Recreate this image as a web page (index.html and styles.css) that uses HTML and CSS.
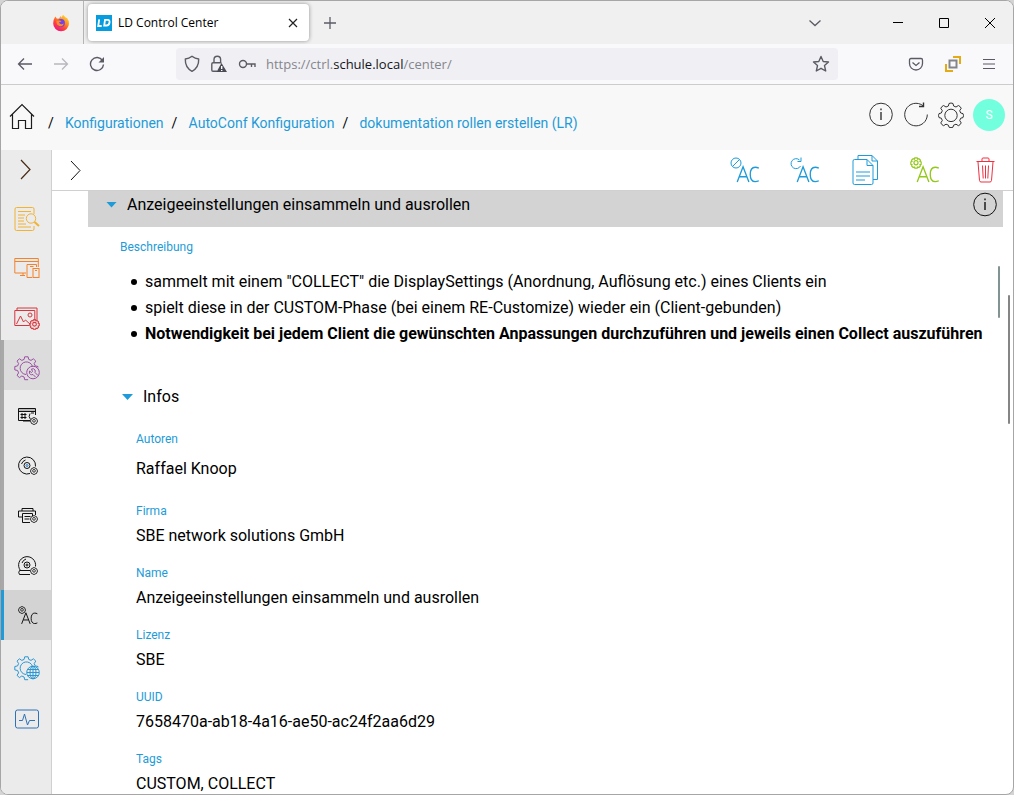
FILE: index.html
```html
<!DOCTYPE html>
<html lang="de">
<head>
<meta charset="utf-8">
<title>LD Control Center</title>
<link rel="stylesheet" href="styles.css">
</head>
<body>
<svg class="defs" aria-hidden="true">
  <symbol id="gear" viewBox="0 0 26 26">
    <path d="M11 1.500q2-1 4 0l.6 2.500 2.400 1 2.400-1.500q2 .8 2.800 2.800L21.700 8.700l1 2.300 2.300.6q1 2 0 4l-2.300.6-1 2.300 1.500 2.400q-.8 2-2.800 2.800L18 22.200l-2.400 1-.6 2q-2 1-4 0l-.6-2-2.400-1-2.400 1.500q-2-.8-2.800-2.800l1.500-2.400-1-2.300-2.300-.6q-1-2 0-4l2.300-.6 1-2.300-1.500-2.400q.8-2 2.800-2.800L8 5l2.400-1z" stroke-linejoin="round"/>
    <circle cx="13" cy="13.400" r="6.200"/>
  </symbol>
  <symbol id="biggear" viewBox="0 0 26 26">
    <path d="M24 11.500v-1l-2.800-.6-1-2.400 1.600-2.400-2.400-2.300-2.400 1.600-2.300-1L14.100.8h-3.400l-.6 2.600-2.300 1-2.400-1.600L3 5.100l1.600 2.400-1 2.400-2.800.6v3.400l2.800.6 1 2.400L3 19.300l2.400 2.300L7.800 20l2.300 1 .6 2.700h3.400"/>
    <path d="M12 18.500a6.300 6.300 0 1 1 6.500-8"/>
  </symbol>
  <symbol id="minigear" viewBox="0 0 10 10">
    <path d="M4 .8h2l.4 1 1-.4 1.300 1.300-.4 1 1 .4v2l-1 .3.4 1-1.300 1.300-1-.4-.4 1H4l-.4-1-1 .4-1.300-1.300.4-1-1-.3v-2l1-.4-.4-1 1.300-1.300 1 .4z"/><circle cx="5" cy="4.800" r="1.700"/>
  </symbol>
  <symbol id="ac" viewBox="0 0 26 20">
    <path d="M1 19 7.500 2 14 19M3.500 13h8M25 3.500Q23 2.500 21 2.500c-3.500 0-5.500 3-5.500 8s2 8 5.500 8q2 0 4-1" stroke-width="1.500"/>
  </symbol>
  <symbol id="info" viewBox="0 0 26 26">
    <circle cx="13" cy="12.500" r="11.300"/><path d="M13 10v8M13 6.500v1.700" stroke-width="1.400"/>
  </symbol>
  <symbol id="chevron" viewBox="0 0 26 26"><path d="m8 4 9 9.500L8 23"/></symbol>
</svg>
<div class="window">
  <header class="tabs">
    <span class="view">
      <svg width="18" height="18" viewBox="0 0 18 18">
        <defs><linearGradient id="fire" x1="1" y1="0" x2=".3" y2="1"><stop offset="0" stop-color="#fff044"/><stop offset=".4" stop-color="#ff9a1f"/><stop offset=".7" stop-color="#ff4438"/><stop offset="1" stop-color="#f0147f"/></linearGradient></defs>
        <path fill="url(#fire)" d="M3.300 2.500 5 4.800l2-.3L8.700 2l.8 1.800L11 .8l2.700 2.600L15 4q2 2.400 2 5.500a7.900 7.700 0 0 1-15.800 0Q1 6 3.300 2.500z"/>
        <circle cx="9" cy="9" r="3.900" fill="#7542e5"/><path d="M4.500 6.800q3-1.600 5 .7l-2.500.8q1 3 5 1.200-1.500 3.500-4.700 2.500T4.500 6.800" fill="#ff8b24"/>
      </svg>
    </span>
    <div class="tab">
      <svg width="16" height="16" viewBox="0 0 16 16"><rect width="16" height="16" fill="#069de0"/><path d="M3.200 4.300 2.200 11h3.500M9 4.800h2.700q2.200 0 1.800 2.700-.4 3-3 3H8.200z" fill="none" stroke="#fff" stroke-width="1.800"/></svg>
      <span class="tab-title">LD Control Center</span>
      <button class="plain" aria-label="Tab schließen"><svg width="10" height="10" viewBox="0 0 10 10"><path d="m1 1 8 8M9 1 1 9" stroke="#222" stroke-width="1.200"/></svg></button>
    </div>
    <button class="plain newtab" aria-label="Neuer Tab"><svg width="14" height="14" viewBox="0 0 14 14"><path d="M7 1v12M1 7h12" stroke="#5b5b66" stroke-width="1.300"/></svg></button>
    <button class="plain alltabs" aria-label="Alle Tabs"><svg width="14" height="14" viewBox="0 0 14 14" fill="none"><path d="m1.500 4.500 5.500 5 5.500-5" stroke="#5b5b66" stroke-width="1.300"/></svg></button>
    <div class="controls">
      <button class="plain" aria-label="Minimieren"><svg width="12" height="12" viewBox="0 0 12 12"><path d="M1 5.500h10" stroke="#000"/></svg></button>
      <button class="plain" aria-label="Maximieren"><svg width="12" height="12" viewBox="0 0 12 12"><path d="M1.500 1.500h9v9h-9z" stroke="#000" fill="none"/></svg></button>
      <button class="plain" aria-label="Schließen"><svg width="12" height="12" viewBox="0 0 12 12"><path d="m1 1 10 10M11 1 1 11" stroke="#000"/></svg></button>
    </div>
  </header>
  <nav class="navbar" aria-label="Browser">
    <div class="history">
      <button class="plain" aria-label="Zurück"><svg width="16" height="16" viewBox="0 0 16 16" fill="none" stroke="#5b5b66" stroke-width="1.300"><path d="M15 8H1.500M7 2.500 1.500 8 7 13.500"/></svg></button>
      <button class="plain" aria-label="Vor"><svg width="16" height="16" viewBox="0 0 16 16" fill="none" stroke="#b8b8bd" stroke-width="1.300"><path d="M1 8h13.500M9 2.500 14.500 8 9 13.500"/></svg></button>
      <button class="plain" aria-label="Neu laden"><svg width="16" height="16" viewBox="0 0 16 16" fill="none" stroke="#5b5b66" stroke-width="1.400"><path d="M13.500 4.500a6.500 6.500 0 1 0 1 4"/><path d="M15 1v5.500H9.500z" fill="#5b5b66" stroke="none"/></svg></button>
    </div>
    <div class="address">
      <svg width="16" height="18" viewBox="0 0 16 18" fill="none" stroke="#5b5b66" stroke-width="1.400"><path d="M8 1.300q3 2.400 6.700 2.700.3 8.500-6.700 12.300Q1 12.500 1.300 4 5 3.700 8 1.300z" stroke-linejoin="round"/></svg>
      <svg class="lock" width="18" height="18" viewBox="0 0 18 18" fill="none" stroke="#5b5b66" stroke-width="1.400"><path d="M7 16.300H3q-1.200 0-1.200-1.200V9q0-1.200 1.200-1.200h8.500M4 7.700V4.500a3.300 3.300 0 0 1 6.600 0v3.200"/><path d="M11.500 8 17 17H6.500z" fill="#4a4a55" stroke="none"/><path d="M11.700 11v3M11.700 15v1" stroke="#fff"/></svg>
      <svg width="18" height="14" viewBox="0 0 18 14" fill="none" stroke="#5b5b66" stroke-width="1.400"><circle cx="5" cy="7" r="3.500"/><path d="M8.500 7H17v3M13.500 7v3"/></svg>
      <span class="url">https://ctrl.<b>schule.local</b>/center/</span>
      <svg class="star" width="18" height="18" viewBox="0 0 18 18" fill="none" stroke="#5b5b66" stroke-width="1.400" stroke-linejoin="round"><path d="m9 1.500 2.200 5 5.300.5-4 3.600 1.200 5.400L9 13.300 4.300 16l1.200-5.400-4-3.600 5.300-.5z"/></svg>
    </div>
    <div class="extras">
      <button class="plain" aria-label="Pocket"><svg width="16" height="16" viewBox="0 0 16 16" fill="none" stroke="#5b5b66" stroke-width="1.300"><path d="M3 2.500h10q1.500 0 1.500 1.500v3.500a6.500 6.500 0 0 1-13 0V4q0-1.500 1.500-1.500z"/><path d="m4.500 6.500 3.500 3 3.500-3"/></svg></button>
      <button class="plain" aria-label="Erweiterung"><svg width="16" height="16" viewBox="0 0 16 16" fill="none" stroke="#e5ab13" stroke-width="2"><path d="M8 1h7v7M1 8v7h7"/><path d="M4.500 4.500h7v7h-7z" stroke="#84848c"/></svg></button>
      <button class="plain" aria-label="Menü"><svg width="14" height="14" viewBox="0 0 14 14" stroke="#5b5b66" stroke-width="1.200"><path d="M1 2.500h12M1 7h12M1 11.500h12"/></svg></button>
    </div>
  </nav>
  <header class="apphead">
    <nav class="crumbs" aria-label="Pfad">
      <a class="home" href="#" aria-label="Start"><svg width="26" height="28" viewBox="0 0 26 28" fill="none" stroke="#1c1c1c" stroke-width="1.200"><path d="M1 13.500 13 1.500l12 12M3.500 11.500V25.500h6v-8h7v8h6v-14"/></svg></a>
      <i>/</i><a href="#">Konfigurationen</a><i>/</i><a href="#">AutoConf Konfiguration</a><i>/</i><a href="#">dokumentation rollen erstellen (LR)</a>
    </nav>
    <div class="tools">
      <button class="plain" aria-label="Info"><svg class="line" width="26" height="26"><use href="#info"/></svg></button>
      <button class="plain" aria-label="Aktualisieren"><svg class="line" width="26" height="26" viewBox="0 0 26 26"><path d="M24.300 12.500A11.300 11.300 0 1 1 20 3.700"/><path d="M20.500.5v4H16" stroke-width="1.400"/></svg></button>
      <button class="plain" aria-label="Einstellungen"><svg class="line" width="26" height="26"><use href="#gear"/></svg></button>
      <button class="avatar">S</button>
    </div>
  </header>
  <div class="app">
    <nav class="side" aria-label="Module">
      <a href="#" class="toggle" aria-label="Ausklappen"><svg class="line brown" width="26" height="26"><use href="#chevron"/></svg></a>
      <a href="#" aria-label="Protokolle"><svg class="line yellow" width="26" height="26" viewBox="0 0 26 26"><path d="M20 8V3q0-1.500-1.500-1.500h-16Q1 1.500 1 3v20q0 1.500 1.500 1.500h16Q20 24.500 20 23v-3M4 5.500h13M4 9h7M4 12h6M4 15h6M4 18h8M4 21h13"/><circle cx="17" cy="12.500" r="4.700"/><path d="m20.500 16 4.500 4" stroke-width="2"/></svg></a>
      <a href="#" aria-label="Geräte"><svg class="line orange" width="26" height="26" viewBox="0 0 26 26"><path d="M12 17H.8V2.500h23.500V11M.8 5.500h23.500M6 19.500h5M9 17v2.500M18 21.500h-5V8.500h9.500V11M16 10.500h3.500"/><rect x="19" y="12.500" width="6" height="9"/><path d="M21 14.500h2"/></svg></a>
      <a href="#" aria-label="Images"><svg class="line red" width="26" height="26" viewBox="0 0 26 26"><path d="M15 19.500H.8v-15h20V14M3 4V2h20v12M2.500 18l4-8 3 6 2-2 5 4.500"/><circle cx="16" cy="9" r="2"/><use href="#minigear" x="15" y="13" width="11" height="11"/></svg></a>
      <a href="#" class="open" aria-label="Konfiguration"><svg class="line purple" width="26" height="26" viewBox="0 0 26 26"><use href="#biggear"/><circle cx="19" cy="16.500" r="6.300"/><path d="M17.500 13q2.500-1 3.500 1 .5 1 0 2.500l3 3M15.500 15q-.7 2.500 1 3.500 1 .5 2.500 0l2.500 2.500M15.500 15l2 1.500 1-1-1-2.500"/></svg></a>
      <a href="#" class="sub" aria-label="Netzwerk"><svg class="line dark" width="20" height="20" viewBox="0 0 20 20"><path d="M1 3h16v2H1z" fill="#bbb" stroke="none"/><path d="M12 14.500H.5v-12h17V9M.5 5.500h17M2.500 8.500h6M2.500 11.500h6M4 7v6M7 7v6M12 15H5M12 7.500q-2 3 .5 6M13 7h3"/><use href="#minigear" x="12" y="11" width="8" height="8"/></svg></a>
      <a href="#" class="sub" aria-label="Software"><svg class="line dark" width="20" height="20" viewBox="0 0 20 20"><path d="M12 17.500a8.500 8.500 0 1 1 5.500-7M3.500 8q1-3 4-4"/><circle cx="9" cy="9.500" r="3"/><circle cx="9" cy="9.500" r="1" class="accent"/><use href="#minigear" x="12" y="11" width="8" height="8"/></svg></a>
      <a href="#" class="sub" aria-label="Drucker"><svg class="line dark" width="20" height="20" viewBox="0 0 20 20"><path d="M4 11H.5V5h17v4M4 5V2.500h11V5M12 16.500H4.500v-9h10V10M6.500 10.500h6M6.500 13h5"/><use href="#minigear" x="12" y="9" width="8" height="8"/></svg></a>
      <a href="#" class="sub" aria-label="Treiber"><svg class="line dark" width="20" height="20" viewBox="0 0 20 20"><path d="M2.500 14.500a8.500 8.500 0 1 1 15-4M12 18.500H1.500q-1.500-2 0-4H12M4 7q1-3 4-4"/><circle cx="9" cy="9" r="3"/><circle cx="9" cy="9" r="1"/><use href="#minigear" x="12" y="11" width="8" height="8"/></svg></a>
      <a href="#" class="sub current" aria-label="AutoConf"><svg class="line dark" width="20" height="20" viewBox="0 0 20 20"><use href="#minigear" x="0" y="0" width="8" height="8"/><use href="#ac" x="3" y="5" width="17" height="14"/></svg></a>
      <a href="#" aria-label="Web"><svg class="line blue" width="26" height="26" viewBox="0 0 26 26"><use href="#biggear"/><circle cx="19" cy="16.500" r="6.300"/><ellipse cx="19" cy="16.500" rx="3" ry="6.300"/><path d="M19 10v13M13 16.500h12M14 13.500h10M14 19.500h10"/></svg></a>
      <a href="#" aria-label="Monitoring"><svg class="line slate" width="26" height="26" viewBox="0 0 26 26"><rect x="1.500" y="4" width="23" height="18" rx="2"/><path d="M5 14.500h3.500l2-6.500 3 11 2-4.500H21"/></svg></a>
    </nav>
    <main class="main">
      <div class="toolbar">
        <button class="plain" aria-label="Ausklappen"><svg class="line black" width="26" height="26"><use href="#chevron"/></svg></button>
        <div class="actions">
          <button class="plain" aria-label="AutoConf deaktivieren"><svg class="line cyan" width="30" height="30" viewBox="0 0 30 30"><circle cx="6" cy="8" r="5"/><path d="m2.500 11.500 7-7"/><use href="#ac" x="6" y="10" width="24" height="18"/></svg></button>
          <button class="plain" aria-label="AutoConf neu laden"><svg class="line cyan" width="30" height="30" viewBox="0 0 30 30"><path d="M10.500 11A5 5 0 1 1 9.500 5M11 2.500v4H7.500"/><use href="#ac" x="6" y="10" width="24" height="18"/></svg></button>
          <button class="plain" aria-label="Kopieren"><svg class="line cyan" width="30" height="32" viewBox="0 0 30 32"><path d="M17 5.500H4.500Q3 5.500 3 7v22q0 1.500 1.500 1.500h17Q23 30.500 23 29V11.500zM17 5.500v6h6M8 5V1.500h14l5.500 5.500v18.500H23M22 1.500V7h5.500M6 18h14M6 22h14M6 26h9"/></svg></button>
          <button class="plain" aria-label="AutoConf einstellen"><svg class="line green" width="30" height="30" viewBox="0 0 30 30"><use href="#minigear" x="0" y="2" width="12" height="12"/><use href="#ac" x="6" y="10" width="24" height="18"/></svg></button>
          <button class="plain" aria-label="Löschen"><svg class="line pink" width="30" height="30" viewBox="0 0 30 30"><path d="M6.500 6.500h18M12 6V4q0-1 1-1h5q1 0 1 1v2M8 7l1.500 18.500q.2 1.500 1.500 1.500h9q1.300 0 1.500-1.500L23 7M12.500 10.500l.7 13M15.500 10.500v13M18.500 10.500l-.7 13"/></svg></button>
        </div>
      </div>
      <div class="scroll">
        <div class="bar">
          <button class="plain fold"><span class="tri"></span>Anzeigeeinstellungen einsammeln und ausrollen</button>
          <button class="plain" aria-label="Info"><svg class="line black" width="26" height="26"><use href="#info"/></svg></button>
        </div>
        <section class="details">
          <h2 class="label">Beschreibung</h2>
          <ul class="list">
            <li>sammelt mit einem "COLLECT" die DisplaySettings (Anordnung, Auflösung etc.) eines Clients ein</li>
            <li>spielt diese in der CUSTOM-Phase (bei einem RE-Customize) wieder ein (Client-gebunden)</li>
            <li><strong>Notwendigkeit bei jedem Client die gewünschten Anpassungen durchzuführen und jeweils einen Collect auszuführen</strong></li>
          </ul>
          <button class="plain fold"><span class="tri"></span>Infos</button>
          <dl class="infos">
            <div class="first"><dt class="label">Autoren</dt><dd>Raffael Knoop</dd></div>
            <div><dt class="label">Firma</dt><dd>SBE network solutions GmbH</dd></div>
            <div><dt class="label">Name</dt><dd>Anzeigeeinstellungen einsammeln und ausrollen</dd></div>
            <div><dt class="label">Lizenz</dt><dd>SBE</dd></div>
            <div><dt class="label">UUID</dt><dd>7658470a-ab18-4a16-ae50-ac24f2aa6d29</dd></div>
            <div><dt class="label">Tags</dt><dd>CUSTOM, COLLECT</dd></div>
          </dl>
        </section>
        <span class="thumb inner"></span>
        <span class="thumb outer"></span>
      </div>
    </main>
  </div>
</div>
</body>
</html>
```
FILE: styles.css
```css
* { box-sizing: border-box; }
body { margin: 0; background: #d4d4d4; font: 16px/24px Roboto, sans-serif; color: #000; }
a { color: #1e9bd8; text-decoration: none; }
svg { display: block; flex: none; }
.defs { position: absolute; width: 0; height: 0; }
.plain { display: flex; align-items: center; padding: 0; border: 0; background: none; font: inherit; color: inherit; }
.line { fill: none; stroke: #333; stroke-width: 1; }

.window { display: flex; flex-direction: column; height: 100vh; overflow: hidden; border: 1px solid #a6a6a6; border-radius: 8px; background: #fff; }
.tabs { display: flex; align-items: center; flex: none; height: 43px; background: #f0f0f0; }
.view { display: flex; align-items: center; justify-content: flex-end; width: 83px; height: 43px; padding-right: 13px; border-right: 1px solid #b5b5b5; }
.tab { display: flex; align-items: center; gap: 6px; width: 221px; height: 37px; margin-left: 4px; padding: 0 11px 0 8px; border-radius: 4px; background: #fff; box-shadow: 0 0 4px rgba(0, 0, 0, .4); }
.tab-title { flex: 1; font: 12px/16px "Open Sans", sans-serif; }
.newtab { margin-left: 14px; }
.alltabs { margin-left: auto; }
.controls { display: flex; gap: 34px; margin: 0 17px 0 70px; }

.navbar { display: flex; align-items: center; flex: none; height: 41px; border-bottom: 1px solid #ccc; background: #f9f9fb; }
.history { display: flex; gap: 20px; width: 175px; padding-left: 16px; }
.address { display: flex; align-items: center; flex: 1; gap: 10px; height: 32px; padding: 0 8px; border-radius: 4px; background: #f0f0f4; }
.url { flex: 1; font: 13px/18px "Open Sans", sans-serif; color: #85858d; }
.url b { font-weight: 400; color: #15141a; }
.extras { display: flex; align-items: center; gap: 21px; padding: 0 17px 0 70px; }

.apphead { display: flex; justify-content: space-between; flex: none; height: 65px; padding: 14px 8px 0; background: #f8f8f8; }
.crumbs { display: flex; align-items: center; height: 48px; font-size: 14px; }
.home { margin-right: 5px; }
.home svg { margin-top: -12px; }
.crumbs i { font-style: normal; width: 6px; margin: 0 11px 0 8px; }
.tools { display: flex; gap: 9px; height: 32px; }
.avatar { width: 32px; height: 32px; padding: 0; border: 0; border-radius: 50%; background: #72ffde; color: #fff; font: 12px/32px Roboto, sans-serif; }

.app { display: flex; flex: 1; min-height: 0; }
.side { flex: none; width: 51px; border-right: 1px solid #d0d0d0; background: #ebebeb; }
.side a { display: block; height: 50px; padding: 16px 0 0 13px; }
.side .toggle { height: 40px; padding: 6px 0 0 12px; }
.side .open { border-left: 3px solid #a8a8a8; padding-left: 10px; background: #dcdcdc; }
.side .sub { border-left: 3px solid #a8a8a8; padding: 16px 0 0 14px; }
.side .current { border-left-color: #1e9bd8; background: #d3d3d3; }
.yellow { stroke: #f2b233; }
.orange { stroke: #f5822b; }
.red { stroke: #d8343c; }
.purple { stroke: #9c4fa5; }
.blue { stroke: #2a97d4; }
.slate { stroke: #2e72b8; }
.brown { stroke: #4b2b14; stroke-width: 1.200; }
.black, .dark { stroke: #111; }
.accent { stroke: #2678c8; }
.cyan { stroke: #1e9bd8; }
.green { stroke: #93c81a; }
.pink { stroke: #ef3040; }

.main { display: flex; flex-direction: column; flex: 1; min-width: 0; }
.toolbar { display: flex; align-items: center; justify-content: space-between; flex: none; height: 41px; padding: 0 13px 0 11px; border-bottom: 1px solid #d0d0d0; }
.actions { display: flex; align-items: center; gap: 30px; }
.scroll { position: relative; flex: 1; min-height: 0; overflow: hidden; padding: 0 10px 0 36px; }
.bar { display: flex; justify-content: space-between; height: 36px; padding: 1px 5px 10px 18px; background: #d3d3d3; }
.fold { gap: 10px; }
.tri { width: 11px; height: 6px; background: #1e9bd8; clip-path: polygon(0 0, 100% 0, 50% 100%); }
.details { padding: 12px 0 0 32px; }
.label { margin: 0; font-size: 12px; line-height: 16px; font-weight: 400; color: #1e9bd8; }
.list { margin: 14px 0 0; padding: 0 0 0 11px; list-style: none; line-height: 26px; white-space: nowrap; }
.list li { display: flex; align-items: center; gap: 8px; }
.list li::before { content: ""; width: 6px; height: 6px; border-radius: 50%; background: #000; }
.details .fold { margin: 38px 0 0 2px; }
.infos { margin: 22px 0 0 16px; }
.infos div { margin-bottom: 17px; }
.infos dd { margin: 5px 0 0; }
.infos .first dd { margin-top: 10px; }
.infos .first { margin-bottom: 22px; }
.thumb { position: absolute; width: 2px; border-radius: 1px; background: #858585; }
.inner { top: 75px; right: 13px; height: 52px; background: #829492; }
.outer { top: 104px; right: 3px; height: 129px; }
```
